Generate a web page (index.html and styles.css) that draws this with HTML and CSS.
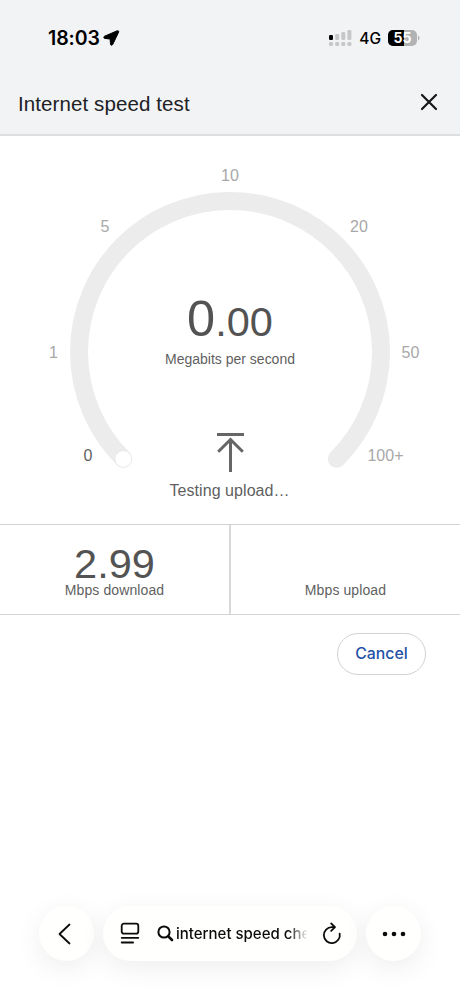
FILE: index.html
```html
<!DOCTYPE html>
<html lang="en">
<head>
<meta charset="utf-8">
<meta name="viewport" content="width=device-width">
<title>Internet speed test</title>
<link rel="stylesheet" href="styles.css">
</head>
<body>
<div class="screen">
  <header class="top">
    <div class="status">
      <span class="clock">18:03</span>
      <svg class="location" width="17" height="16" viewBox="0 0 17 16"><path d="M14.200.8 1.600 6.200C.4 6.800.6 8.200 1.800 8.400l5.300.6.400 5c.1 1.500 1.700 1.600 2.300.3L15.600 2.200c.5-1-.4-1.800-1.400-1.400Z" stroke="#000" stroke-width="1"/></svg>
      <svg class="signal" width="23" height="17" viewBox="0 0 23 17">
        <g fill="#c6c7c9"><rect x="6.200" y="4" width="4" height="6" rx="1.300"/><rect x="12.300" y="2" width="4" height="8" rx="1.300"/><rect x="18.400" y="0" width="4" height="10" rx="1.300"/><rect x="0" y="12" width="4" height="4" rx="1.300"/><rect x="6.200" y="12" width="4" height="4" rx="1.300"/><rect x="12.300" y="12" width="4" height="4" rx="1.300"/><rect x="18.400" y="12" width="4" height="4" rx="1.300"/></g>
        <rect y="5" width="4" height="5" rx="1.300"/>
      </svg>
      <span class="network">4G</span>
      <svg class="battery" width="32" height="16" viewBox="0 0 32 16">
        <rect width="29" height="16" rx="5" fill="#b1b2b4"/>
        <path d="M5 0h11v16H5a5 5 0 0 1-5-5V5a5 5 0 0 1 5-5Z"/>
        <path d="M30 5.500c2 .8 2 4.200 0 5Z" fill="#b1b2b4"/>
        <text x="14.500" y="12.900" text-anchor="middle">55</text>
      </svg>
    </div>
    <div class="heading">
      <h1>Internet speed test</h1>
      <svg class="close" width="18" height="18" viewBox="0 0 18 18"><path d="m2 2 14 14M16 2 2 16"/></svg>
    </div>
  </header>
  <main>
    <svg class="gauge" width="460" height="388" viewBox="0 136 460 388">
      <path class="track" d="M123.300 458.800A151 151 0 1 1 336.700 458.800"/>
      <circle class="knob" cx="123.300" cy="459" r="8.300"/>
      <g class="scale">
        <text x="230" y="181">10</text>
        <text x="105" y="232.400">5</text>
        <text x="359" y="232.400">20</text>
        <text x="53.500" y="358.400">1</text>
        <text x="410.500" y="358.400">50</text>
        <text class="active" x="88" y="461.400">0</text>
        <text x="385.500" y="461.400">100+</text>
      </g>
      <text class="value" x="230" y="336.400"><tspan class="whole">0</tspan>.00</text>
      <text class="unit" x="230" y="364" textLength="130">Megabits per second</text>
      <path class="upload" d="M217 434.400h27M230.500 472V440M218.200 451.800l12.300-12.300 12.300 12.300"/>
      <text class="testing" x="229.500" y="495.500" textLength="120">Testing upload…</text>
    </svg>
    <section class="results">
      <div class="result"><strong>2.99</strong><span>Mbps download</span></div>
      <div class="result"><strong></strong><span>Mbps upload</span></div>
    </section>
    <div class="actions"><button class="cancel">Cancel</button></div>
  </main>
  <nav class="browser">
    <div class="round"><svg class="back" width="16" height="24" viewBox="0 0 16 24"><path d="M12.500 2.500 2.500 12l10 9.500"/></svg></div>
    <div class="address">
      <svg class="reader" width="20" height="23" viewBox="0 0 20 23"><rect x="1.700" y="1.700" width="16.600" height="10" rx="2.200"/><path d="M1.700 15.800h16.600M1.700 20.500h11.400"/></svg>
      <svg class="search" width="17" height="17" viewBox="0 0 17 17"><circle cx="7" cy="7" r="5.600"/><path d="m11.300 11.300 3.700 3.700" stroke-width="2.600"/></svg>
      <span class="query">internet speed check</span>
      <svg class="reload" width="20" height="24" viewBox="0 0 20 24"><path d="M17.700 11.600a8 8 0 1 1-7.700-6.500h2.800M9.200 1.500l3.800 3.700-3.800 3.700"/></svg>
    </div>
    <div class="round"><svg class="dots" width="24" height="6" viewBox="0 0 24 6"><circle cx="3" cy="3" r="2.300"/><circle cx="12" cy="3" r="2.300"/><circle cx="21" cy="3" r="2.300"/></svg></div>
  </nav>
</div>
</body>
</html>
```
FILE: styles.css
```css
* { box-sizing: border-box; }
body { margin: 0; background: #fff; font-family: "Liberation Sans", Arial, sans-serif; }
.screen { width: 460px; height: 1000px; display: flex; flex-direction: column; overflow: hidden; }
svg { display: block; flex: none; }
.top { height: 136px; background: #f2f3f5; border-bottom: 2px solid #dddee0; }
.status { height: 76px; padding: 0 40px 0 48px; display: flex; align-items: center; font-family: Inter, sans-serif; }
.clock { font-size: 19.500px; font-weight: 600; letter-spacing: -.1px; }
.location { margin-left: 3px; }
.signal { margin-left: auto; }
.network { margin: 0 7px 0 7px; font-size: 15.500px; font-weight: 500; }
.battery text { font: 700 14px Inter, sans-serif; fill: #fff; }
.heading { height: 56px; padding: 0 22px 0 18px; display: flex; align-items: center; justify-content: space-between; }
h1 { margin: 0; font-size: 20.500px; font-weight: 400; color: #202124; letter-spacing: .1px; }
.close { fill: none; stroke: #161719; stroke-width: 2.200; stroke-linecap: round; margin-bottom: 4px; }
main { flex: 1; }
.track { fill: none; stroke: #ececec; stroke-width: 18; stroke-linecap: round; }
.knob { fill: #fff; stroke: #e6e6e6; stroke-width: .6; }
.gauge text { text-anchor: middle; fill: #5f5f5f; }
.gauge .scale text { font-size: 16px; fill: #a8a8a8; }
.gauge .scale .active { fill: #5f5f5f; }
.gauge .value { font-size: 41.500px; fill: #535353; }
.whole { font-size: 50.500px; }
.unit { font-size: 14px; }
.testing { font-size: 16px; }
.upload { fill: none; stroke: #666; stroke-width: 3; }
.results { display: grid; grid-template-columns: 231px 1fr; height: 91px; border: solid #d3d3d3; border-width: 1px 0; }
.result { display: flex; flex-direction: column; align-items: center; padding-top: 15px; }
.result:first-child { border-right: 2px solid #d9d9d9; }
.result strong { height: 42px; line-height: 48px; font-size: 41.500px; font-weight: 400; color: #535353; }
.result span { font-size: 14px; line-height: 16px; color: #5f5f5f; letter-spacing: .1px; }
.actions { display: flex; justify-content: flex-end; padding: 18px 34px 0; }
.cancel { width: 89px; height: 42px; padding: 0 0 2px; border: 1px solid #d2d2d2; border-radius: 21px; background: #fff; color: #2450a8; font: 500 15.800px Inter, sans-serif; }
.browser { height: 122px; padding: 28px 39px 0; display: flex; gap: 9px; }
.round, .address { height: 55px; border-radius: 28px; background: #fffffe; box-shadow: 0 7px 28px rgba(0,0,0,.07); display: flex; align-items: center; }
.round { width: 55px; flex: none; justify-content: center; }
.address { flex: 1; padding: 0 15px 0 17px; }
.browser svg { fill: none; stroke: #0b0b0b; stroke-width: 1.800; stroke-linecap: round; stroke-linejoin: round; }
.browser .back { margin-right: 4px; }
.browser .search { margin-left: 17px; stroke-width: 2; }
.browser .dots { fill: #0b0b0b; stroke: none; }
.query { width: 132px; margin: 0 auto 0 2px; overflow: hidden; white-space: nowrap; font: 500 15px/20px Inter, sans-serif; color: #0b0b0b; -webkit-mask-image: linear-gradient(90deg, #000 112px, transparent 132px); mask-image: linear-gradient(90deg, #000 112px, transparent 132px); }
```
